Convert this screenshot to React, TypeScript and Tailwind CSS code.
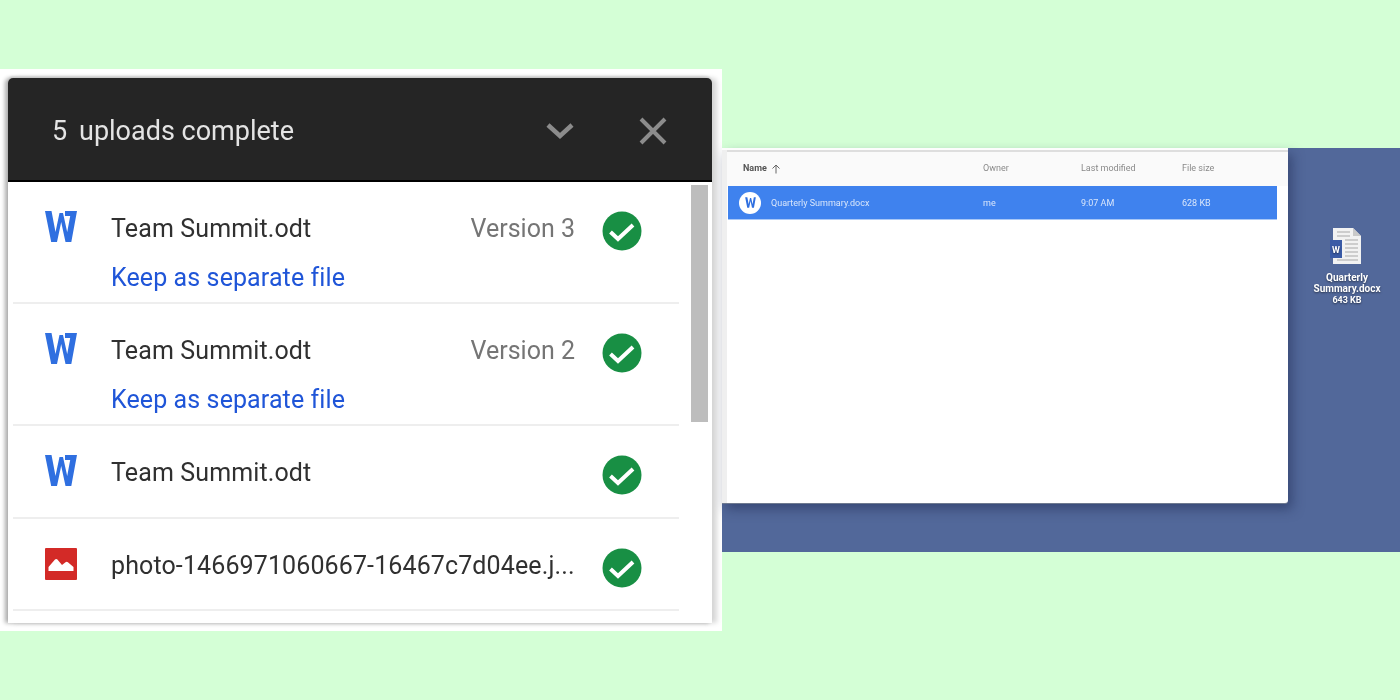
const WordIcon = () => (
    <svg width="32" height="33" viewBox="0 0 32 33" className="shrink-0 -mt-[1px]">
        <path d="M0 1h6.500l4 21L14.500 3h3.500l4.200 19L25.200 6H20V1h12l-5.700 31h-5.800L16.200 12 12 32H6.200z" fill="#2f6fe0" />
    </svg>
);

const PhotoIcon = () => (
    <svg width="32" height="32" viewBox="0 0 32 32" className="shrink-0">
        <rect width="32" height="32" rx="1" fill="#d32a27" />
        <path d="M3.500 23v-4l6.500-7.500q1.200-1.200 2.400 0l4.600 5.500 3.500-2.800q1.200-.9 2.400 0L28.500 19v4z" fill="#fff" />
    </svg>
);

const CheckBadge = () => (
    <svg width="40" height="40" viewBox="0 0 40 40" className="shrink-0">
        <circle cx="20" cy="20" r="19.500" fill="#188f44" />
        <path d="M8.500 21l7.500 7 15-14" fill="none" stroke="#fff" strokeWidth="4" />
    </svg>
);

interface UploadRowProps {
    name: string;
    version?: string;
    keepLink?: boolean;
    photo?: boolean;
}

const UploadRow = ({ name, version, keepLink, photo }: UploadRowProps) => (
    <div className={`flex border-b-2 border-[#eeeeee] pl-[32px] pt-[29px] ${keepLink ? "h-[122px]" : "h-[92.5px]"}`}>
        {photo ? <PhotoIcon /> : <WordIcon />}
        <div className="ml-[34px] flex-1 min-w-0">
            <div className="flex items-center h-[36px]">
                <span className="flex-1 whitespace-nowrap text-[25px] tracking-[0.12px] text-[#303030]">{name}</span>
                {version && <span className="text-[25px] text-[#757575]">{version}</span>}
            </div>
            {keepLink && <div className="mt-[14px] text-[25px] tracking-[0.1px] leading-[34px] text-[#1f55d8]">Keep as separate file</div>}
        </div>
        <div className="ml-[27px] mr-[37px]">
            <CheckBadge />
        </div>
    </div>
);

const UploadPanel = () => (
    <div className="w-[722px] h-[562px] mt-[69px] bg-white pl-[8px] pt-[9px] pr-[10px] pb-[8px] shrink-0">
        <div className="h-full flex flex-col rounded-t-[5px] blur-[0.4px] shadow-[-3px_0_4px_#ababab,5px_0_5px_#d8d8d8,0_-2px_2px_#e4e4e4]">
            <div className="h-[104px] shrink-0 rounded-t-[5px] bg-[#252525] border-b-2 border-black flex items-center pt-[3px] pl-[44px] pr-[44px] text-[#e4e4e4]">
                <span className="text-[27px] w-[27px] mt-[2px]">5</span>
                <span className="text-[27px] flex-1 mt-[2px]">uploads complete</span>
                <svg width="28" height="18" viewBox="0 0 28 18" className="mr-[64px] mt-[1px]">
                    <path d="M2 3l12 11L26 3" fill="none" stroke="#8c8c8c" strokeWidth="4.500" />
                </svg>
                <svg width="30" height="30" viewBox="0 0 30 30">
                    <path d="M3 3l24 24M27 3L3 27" fill="none" stroke="#8c8c8c" strokeWidth="4" />
                </svg>
            </div>
            <div className="flex-1 flex bg-white pl-[5px] mr-[2px] overflow-hidden">
                <div className="w-[666px] shrink-0">
                    <UploadRow name="Team Summit.odt" version="Version 3" keepLink />
                    <UploadRow name="Team Summit.odt" version="Version 2" keepLink />
                    <UploadRow name="Team Summit.odt" />
                    <UploadRow name="photo-1466971060667-16467c7d04ee.j..." photo />
                </div>
                <div className="ml-[12px] mt-[3px] w-[17px] h-[237px] bg-[#bdbdbd]" />
            </div>
        </div>
    </div>
);

const FileRow = () => (
    <div className="h-[34px] ml-[1px] mr-[11px] bg-[#3f82ee] border-b border-[#a9c8f7] flex items-center pt-[2px] text-[9px] text-[#d9e6fb]">
        <div className="w-[22px] h-[22px] ml-[11px] mr-[10px] -mt-[2px] rounded-full bg-white flex items-center justify-center">
            <svg width="11" height="11" viewBox="0 0 32 33">
                <path d="M0 1h6.500l4 21L14.500 3h3.500l4.200 19L26 1h6l-5.700 31h-5.800L16.200 12 12 32H6.200z" fill="#2f6fe0" />
            </svg>
        </div>
        <span className="w-[212px]">Quarterly Summary.docx</span>
        <span className="w-[98px]">me</span>
        <span className="w-[101px]">9:07 AM</span>
        <span>628 KB</span>
    </div>
);

const DesktopIcon = () => (
    <div className="w-[70px] mt-[80px] ml-[24px] flex flex-col items-center text-white text-center font-bold text-[10px] leading-[11px] [text-shadow:0_1px_2px_rgba(0,0,0,0.5)]">
        <svg width="34" height="36" viewBox="0 0 34 36">
            <path d="M3 0h20l8 8v28H3z" fill="#f2f2f2" />
            <path d="M23 0l8 8h-8z" fill="#c9c9c9" />
            <path d="M7 4h13M7 8h13M15 12h13M15 16h13M15 20h13M15 24h13M15 28h13M7 32h21" stroke="#a8a8a8" strokeWidth="1.200" />
            <rect x="0" y="12" width="12" height="18" fill="#3a5ba6" />
            <text x="6" y="25" fontSize="9" fontWeight="700" fill="#fff" textAnchor="middle">W</text>
        </svg>
        <div className="mt-[8px] whitespace-nowrap">Quarterly</div>
        <div className="whitespace-nowrap">Summary.docx</div>
        <div className="text-[9px] mt-[1px]">643 KB</div>
    </div>
);

const DrivePanel = () => (
    <div className="flex-1 h-[404px] mt-[148px] bg-[#52689a] flex items-start blur-[0.5px]">
        <div className="w-[566px] h-[355px] shrink-0 flex bg-white rounded-br-[3px] border-t-2 border-[#fdfdfd] shadow-[0_1px_0_#6f7a90,4px_6px_12px_rgba(30,40,80,0.5)]">
            <div className="w-[5px] shrink-0 bg-[#efefef]" />
            <div className="flex-1">
                <div className="h-[36px] bg-[#fafafa] border-t-2 border-[#dedede] flex items-center text-[9px] text-[#8a8a8a]">
                    <span className="ml-[16px] w-[240px] font-bold text-[#555555] flex items-center gap-[4px]">
                        Name
                        <svg width="10" height="10" viewBox="0 0 10 10">
                            <path d="M5 9.500V1M1.500 4.500L5 1l3.500 3.500" fill="none" stroke="#666" strokeWidth="1" />
                        </svg>
                    </span>
                    <span className="w-[98px]">Owner</span>
                    <span className="w-[101px]">Last modified</span>
                    <span>File size</span>
                </div>
                <FileRow />
            </div>
        </div>
        <DesktopIcon />
    </div>
);

export default function App() {
    return (
        <div className="w-[1400px] h-[700px] bg-[#d4ffd6] flex items-start overflow-hidden font-['Roboto',sans-serif]">
            <UploadPanel />
            <DrivePanel />
        </div>
    );
}
